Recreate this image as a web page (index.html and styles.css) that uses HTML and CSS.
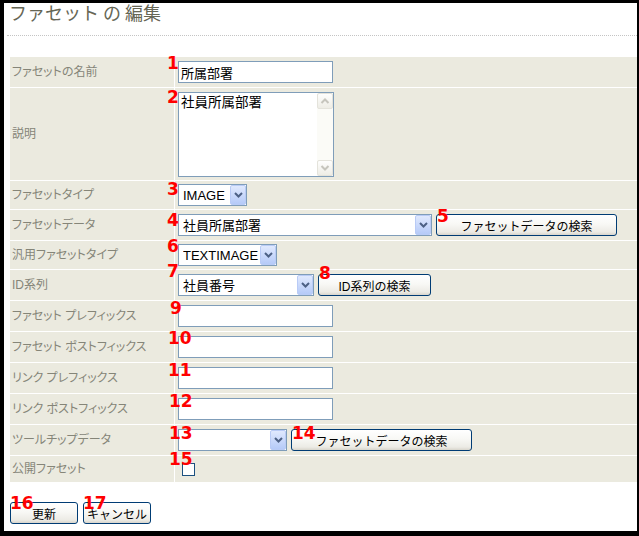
FILE: index.html
```html
<!DOCTYPE html>
<html lang="ja">
<head>
<meta charset="utf-8">
<title>ファセットの編集</title>
<link rel="stylesheet" href="styles.css">
</head>
<body>
<div class="frame">
  <div class="header"><h1 class="title">ファセット の 編集</h1></div>
  <div class="form">
    <div class="label">ファセットの名前</div>
    <div class="value"><input class="text" type="text" value="所属部署"></div>

    <div class="label">説明</div>
    <div class="value top">
      <div class="ta">
        <textarea class="ta-input">社員所属部署</textarea>
        <div class="scrollbar">
          <span class="sb-btn"><svg width="10" height="8" viewBox="0 0 10 8"><path d="M1.5 6 L5 2.5 L8.5 6" fill="none" stroke="#c6c5bd" stroke-width="2"/></svg></span>
          <span class="sb-btn"><svg width="10" height="8" viewBox="0 0 10 8"><path d="M1.5 2 L5 5.5 L8.5 2" fill="none" stroke="#c6c5bd" stroke-width="2"/></svg></span>
        </div>
      </div>
    </div>

    <div class="label">ファセットタイプ</div>
    <div class="value">
      <span class="combo w69"><select class="combo-select"><option>IMAGE</option></select><span class="drop"><svg width="9" height="6" viewBox="0 0 9 6"><path d="M1 1 L4.5 4.5 L8 1" fill="none" stroke="#4d6185" stroke-width="2"/></svg></span></span>
    </div>

    <div class="label">ファセットデータ</div>
    <div class="value">
      <span class="combo w254"><select class="combo-select"><option>社員所属部署</option></select><span class="drop"><svg width="9" height="6" viewBox="0 0 9 6"><path d="M1 1 L4.5 4.5 L8 1" fill="none" stroke="#4d6185" stroke-width="2"/></svg></span></span>
      <button class="btn btn-wide" type="button">ファセットデータの検索</button>
    </div>

    <div class="label">汎用ファセットタイプ</div>
    <div class="value">
      <span class="combo w99"><select class="combo-select"><option>TEXTIMAGE</option></select><span class="drop"><svg width="9" height="6" viewBox="0 0 9 6"><path d="M1 1 L4.5 4.5 L8 1" fill="none" stroke="#4d6185" stroke-width="2"/></svg></span></span>
    </div>

    <div class="label">ID系列</div>
    <div class="value">
      <span class="combo w136"><select class="combo-select"><option>社員番号</option></select><span class="drop"><svg width="9" height="6" viewBox="0 0 9 6"><path d="M1 1 L4.5 4.5 L8 1" fill="none" stroke="#4d6185" stroke-width="2"/></svg></span></span>
      <button class="btn btn-id" type="button">ID系列の検索</button>
    </div>

    <div class="label">ファセット プレフィックス</div>
    <div class="value"><input class="text" type="text" value=""></div>

    <div class="label">ファセット ポストフィックス</div>
    <div class="value"><input class="text" type="text" value=""></div>

    <div class="label">リンク プレフィックス</div>
    <div class="value"><input class="text" type="text" value=""></div>

    <div class="label">リンク ポストフィックス</div>
    <div class="value"><input class="text" type="text" value=""></div>

    <div class="label">ツールチップデータ</div>
    <div class="value">
      <span class="combo w109"><select class="combo-select"><option></option></select><span class="drop"><svg width="9" height="6" viewBox="0 0 9 6"><path d="M1 1 L4.5 4.5 L8 1" fill="none" stroke="#4d6185" stroke-width="2"/></svg></span></span>
      <button class="btn btn-wide" type="button">ファセットデータの検索</button>
    </div>

    <div class="label">公開ファセット</div>
    <div class="value"><input class="check" type="checkbox"></div>
  </div>
  <div class="actions">
    <button class="btn btn-small" type="button">更新</button>
    <button class="btn btn-small" type="button">キャンセル</button>
  </div>
</div>

<div class="marks">
  <span class="mark m1">1</span>
  <span class="mark m2">2</span>
  <span class="mark m3">3</span>
  <span class="mark m4">4</span>
  <span class="mark m5">5</span>
  <span class="mark m6">6</span>
  <span class="mark m7">7</span>
  <span class="mark m8">8</span>
  <span class="mark m9">9</span>
  <span class="mark m10">10</span>
  <span class="mark m11">11</span>
  <span class="mark m12">12</span>
  <span class="mark m13">13</span>
  <span class="mark m14">14</span>
  <span class="mark m15">15</span>
  <span class="mark m16">16</span>
  <span class="mark m17">17</span>
</div>
</body>
</html>
```

FILE: styles.css
```css
html, body {
  margin: 0;
  padding: 0;
  background: #fff;
}

body {
  font-family: "Liberation Sans", "Noto Sans CJK JP", sans-serif;
  color: #000;
}

.frame {
  width: 639px;
  height: 536px;
  box-sizing: border-box;
  border-style: solid;
  border-color: #000;
  border-width: 3px 2px 5px 4px;
  background: #fff;
}

.header {
  margin-left: 3px;
  height: 32px;
  border-bottom: 1px dotted #c4c4c4;
}

.title {
  margin: 0;
  padding-left: 2px;
  font-family: "Noto Sans CJK JP", sans-serif;
  font-weight: normal;
  font-size: 18px;
  line-height: 18px;
  color: #666655;
}

.form {
  display: grid;
  grid-template-columns: 164px 462px;
  grid-template-rows: 30px 92px 28px 30px 28px 30px 30px 30px 30px 30px 30px 26px;
  gap: 1px;
  margin: 21px 0 0 6px;
}

.label {
  background: #ebeadf;
  color: #858578;
  font-size: 12px;
  line-height: 14px;
  padding-left: 2px;
  display: flex;
  align-items: center;
  font-feature-settings: "palt";
  white-space: nowrap;
}

.value {
  background: #ebeadf;
  display: flex;
  align-items: center;
  gap: 4px;
  padding-left: 3px;
}

.value.top {
  align-items: flex-start;
  padding-top: 4px;
}

.text {
  box-sizing: border-box;
  width: 155px;
  height: 22px;
  margin: 0;
  padding: 0 2px;
  border: 1px solid #7f9db9;
  background: #fff;
  font-family: inherit;
  font-size: 13px;
  color: #000;
  outline: none;
}

.ta {
  display: flex;
  box-sizing: border-box;
  width: 156px;
  height: 85px;
  border: 1px solid #7f9db9;
  background: #fff;
}

.ta-input {
  flex: 1;
  min-width: 0;
  margin: 0;
  border: 0;
  padding: 2px 2px;
  resize: none;
  overflow: hidden;
  font-family: inherit;
  font-size: 13.5px;
  line-height: 16px;
  color: #000;
  outline: none;
  background: #fff;
}

.scrollbar {
  width: 16px;
  display: flex;
  flex-direction: column;
  justify-content: space-between;
  background: #fbfbf7;
}

.sb-btn {
  height: 16px;
  box-sizing: border-box;
  border: 1px solid #e4e3db;
  border-radius: 2px;
  background: linear-gradient(#fefefd, #eeede6);
  display: flex;
  align-items: center;
  justify-content: center;
}

.combo {
  display: inline-flex;
  box-sizing: border-box;
  height: 22px;
  border: 1px solid #7f9db9;
  background: #fff;
}

.w69 { width: 69px; }
.w99 { width: 99px; }
.w109 { width: 109px; }
.w136 { width: 136px; }
.w254 { width: 254px; }

.combo-select {
  -webkit-appearance: none;
  appearance: none;
  flex: 1;
  min-width: 0;
  margin: 0;
  border: 0;
  padding: 0 0 0 4px;
  background: transparent;
  font-family: inherit;
  font-size: 13px;
  color: #000;
  outline: none;
}

.drop {
  width: 16px;
  height: 20px;
  box-sizing: border-box;
  border: 1px solid #b9cbf6;
  border-radius: 2px;
  background: linear-gradient(#e0e9fe, #b5caf8);
  display: flex;
  align-items: center;
  justify-content: center;
}

.btn {
  box-sizing: border-box;
  height: 22px;
  margin: 0;
  padding: 0;
  border: 1px solid #003c74;
  border-radius: 3px;
  background: linear-gradient(#ffffff 0%, #f8f8f5 45%, #ecebe5 85%, #d8d5cc 100%);
  font-family: inherit;
  font-size: 12px;
  color: #000;
}

.btn-wide { width: 181px; }
.btn-id { width: 113px; }
.btn-small { width: 68px; }

.check {
  -webkit-appearance: none;
  appearance: none;
  width: 13px;
  height: 13px;
  margin: 0 0 0 4px;
  box-sizing: border-box;
  border: 1px solid #1c5180;
  background: #fff;
}

.actions {
  display: flex;
  gap: 5px;
  margin: 20px 0 0 6px;
}

.mark {
  position: absolute;
  font-family: "DejaVu Sans", sans-serif;
  font-weight: bold;
  font-size: 17px;
  line-height: 17px;
  color: #ff0000;
}

.m1 { left: 167px; top: 55px; }
.m2 { left: 167px; top: 89px; }
.m3 { left: 167px; top: 181px; }
.m4 { left: 167px; top: 212px; }
.m5 { left: 437px; top: 208px; }
.m6 { left: 167px; top: 238px; }
.m7 { left: 167px; top: 263px; }
.m8 { left: 319px; top: 265px; }
.m9 { left: 170px; top: 300px; }
.m10 { left: 168px; top: 330px; }
.m11 { left: 168px; top: 362px; }
.m12 { left: 169px; top: 393px; }
.m13 { left: 169px; top: 425px; }
.m14 { left: 292px; top: 425px; }
.m15 { left: 169px; top: 451px; }
.m16 { left: 10px; top: 495px; }
.m17 { left: 83px; top: 495px; }
```
